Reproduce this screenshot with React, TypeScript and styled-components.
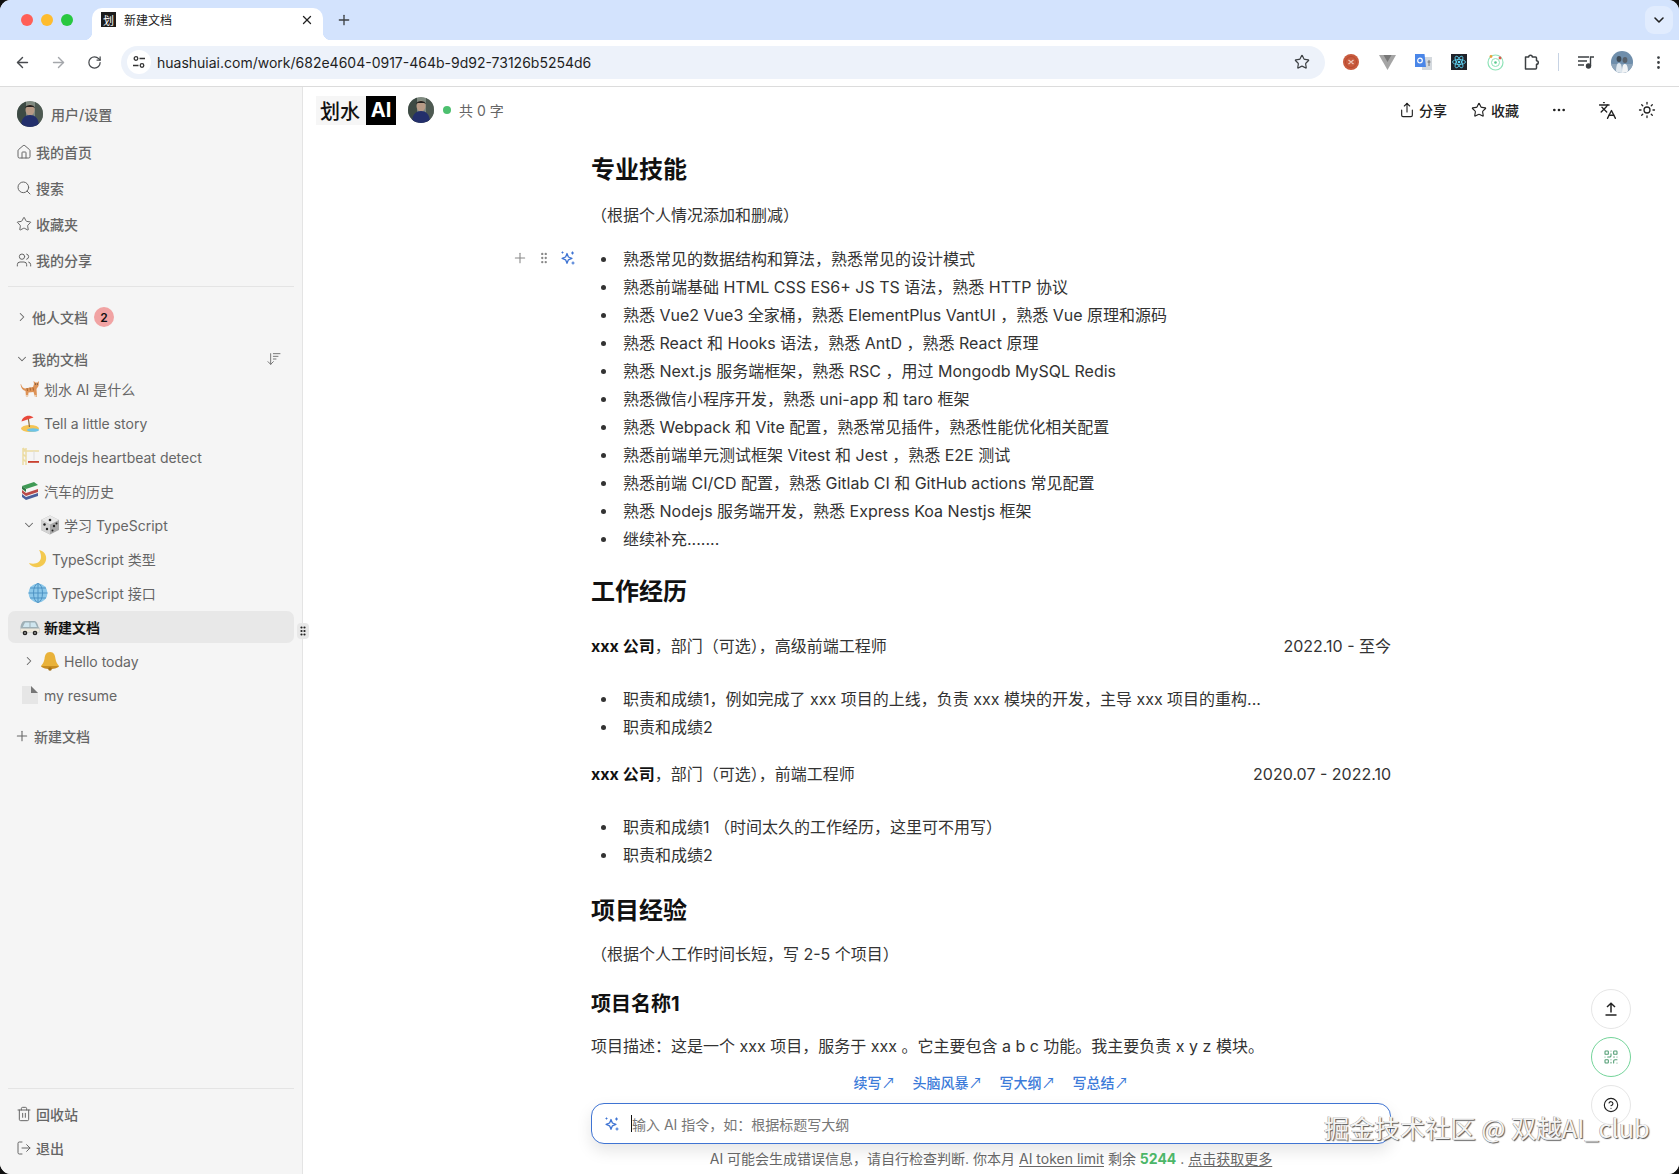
import React from 'react'
import styled, { createGlobalStyle } from 'styled-components'
import {
  ArrowLeft,
  ArrowRight,
  RotateCw,
  Star,
  X,
  Plus,
  ChevronDown,
  ChevronRight,
  EllipsisVertical,
  Ellipsis,
  House,
  Search,
  Users,
  ArrowDownWideNarrow,
  Trash2,
  LogOut,
  Share,
  Languages,
  Sun,
  QrCode,
  CircleHelp,
  GripVertical,
} from 'lucide-react'

const FONT = `Inter, 'Noto Sans CJK SC', 'Noto Sans', sans-serif`

const GlobalStyle = createGlobalStyle`
  html, body {
    margin: 0;
    padding: 0;
    background: #111;
    font-family: ${FONT};
  }
  * {
    box-sizing: border-box;
  }
`

const Window = styled.div`
  position: relative;
  width: 1679px;
  height: 1174px;
  display: flex;
  flex-direction: column;
  overflow: hidden;
  border-radius: 11px;
  background: #fff;
`

const TabStrip = styled.div`
  height: 40px;
  flex: none;
  display: flex;
  align-items: flex-end;
  padding-left: 17px;
  background: #d3e3fd;
`

const TrafficLights = styled.div`
  width: 75px;
  height: 40px;
  display: flex;
  align-items: center;
  gap: 8px;
  padding: 0 0 1px 4px;
`

const Light = styled.span<{ $color: string }>`
  width: 12px;
  height: 12px;
  border-radius: 50%;
  background: ${({ $color }) => $color};
`

const Tab = styled.div`
  position: relative;
  width: 231px;
  height: 32px;
  display: flex;
  align-items: center;
  padding: 0 9px 9px;
  gap: 8px;
  background: #fff;
  border-radius: 10px 10px 0 0;
  font-size: 12px;
  color: #222;

  &::before,
  &::after {
    content: '';
    position: absolute;
    bottom: 0;
    width: 8px;
    height: 8px;
  }
  &::before {
    left: -8px;
    background: radial-gradient(circle at 0 0, transparent 8px, #fff 8.5px);
  }
  &::after {
    right: -8px;
    background: radial-gradient(circle at 100% 0, transparent 8px, #fff 8.5px);
  }
`

const Favicon = styled.span`
  width: 15px;
  height: 15px;
  display: flex;
  align-items: center;
  justify-content: center;
  background: #1c1c1c;
  color: #fff;
  font-size: 11px;
`

const TabTitle = styled.span`
  flex: 1;
`

const NewTab = styled.span`
  width: 42px;
  height: 32px;
  padding-bottom: 9px;
  display: flex;
  align-items: center;
  justify-content: center;
  color: #3c4043;
`

const TabMenu = styled.span`
  margin-left: auto;
  margin-right: 6px;
  margin-bottom: 6px;
  width: 28px;
  height: 28px;
  border-radius: 9px;
  display: flex;
  align-items: center;
  justify-content: center;
  background: #e1ecfe;
  color: #222;
`

const Toolbar = styled.div`
  height: 47px;
  flex: none;
  display: flex;
  align-items: center;
  background: #fff;
  border-bottom: 1px solid #dcdcdc;
  padding: 0 0 2px 13px;
`

const NavButton = styled.span<{ $muted?: boolean }>`
  width: 18px;
  height: 18px;
  margin-right: 18px;
  display: flex;
  align-items: center;
  justify-content: center;
  color: ${({ $muted }) => ($muted ? '#a4a7ab' : '#474a4e')};
`

const Omnibox = styled.div`
  width: 1204px;
  height: 33px;
  display: flex;
  align-items: center;
  border-radius: 17px;
  background: #edf2fa;
  padding: 0 15px 0 6px;
  font-size: 14px;
  color: #1f1f1f;
`

const SiteBadge = styled.span`
  width: 24px;
  height: 24px;
  margin-right: 6px;
  border-radius: 50%;
  background: #fff;
  display: flex;
  align-items: center;
  justify-content: center;
`

const Url = styled.span`
  flex: 1;
`

const ExtensionTray = styled.div`
  display: flex;
  align-items: center;
  margin-left: 8px;
`

const ExtensionSlot = styled.span`
  width: 36px;
  height: 24px;
  display: flex;
  align-items: center;
  justify-content: center;
  color: #3c4043;
`

const TrayDivider = styled.span`
  width: 1px;
  height: 18px;
  margin: 0 9px;
  background: #c7d3e4;
`

const Body = styled.div`
  flex: 1;
  min-height: 0;
  display: flex;
`

const Sidebar = styled.aside`
  position: relative;
  z-index: 1;
  width: 303px;
  flex: none;
  display: flex;
  flex-direction: column;
  padding: 10px 8px 9px;
  background: #f5f5f5;
  border-right: 1px solid #e4e4e4;
  font-size: 14px;
  color: #666;
`

const UserRow = styled.div`
  height: 34px;
  margin-bottom: 3px;
  display: flex;
  align-items: center;
  gap: 8px;
  padding-left: 9px;
  font-weight: 500;
`

const NavRow = styled.div<{ $height?: number }>`
  height: ${({ $height }) => $height ?? 36}px;
  display: flex;
  align-items: center;
  gap: 4px;
  padding-left: 8px;
  font-weight: 500;
`

const SideDivider = styled.div<{ $top: number; $bottom: number }>`
  height: 1px;
  flex: none;
  margin: ${({ $top, $bottom }) => `${$top}px 0 ${$bottom}px`};
  background: #e4e4e4;
`

const SectionRow = styled.div<{ $top?: number; $height?: number }>`
  height: ${({ $height }) => $height ?? 34}px;
  margin-top: ${({ $top }) => $top ?? 0}px;
  flex: none;
  display: flex;
  align-items: center;
  gap: 3px;
  padding-left: 7px;
  font-weight: 500;
`

const CountBadge = styled.span`
  width: 20px;
  height: 20px;
  margin-left: 3px;
  border-radius: 50%;
  display: flex;
  align-items: center;
  justify-content: center;
  background: #f1a3a3;
  color: #111;
  font-size: 12px;
  font-weight: 600;
`

const SortIcon = styled.span`
  margin-left: auto;
  margin-right: 12px;
  display: flex;
  color: #777;
`

const DocList = styled.div`
  margin-top: 1px;
  display: flex;
  flex-direction: column;
  gap: 2px;
`

const DocRow = styled.div<{ $indent: number; $active?: boolean }>`
  height: 32px;
  display: flex;
  align-items: center;
  gap: 4px;
  padding-left: ${({ $indent }) => $indent}px;
  border-radius: 7px;
  background: ${({ $active }) => ($active ? '#e8e8e8' : 'transparent')};
  color: ${({ $active }) => ($active ? '#111' : '#666')};
  font-weight: ${({ $active }) => ($active ? 600 : 400)};
`

const NewDocRow = styled.div`
  height: 34px;
  margin-top: 8px;
  display: flex;
  align-items: center;
  gap: 4px;
  padding-left: 6px;
  font-weight: 500;
`

const BottomGroup = styled.div`
  margin-top: auto;
  display: flex;
  flex-direction: column;
`

const ResizeHandle = styled.span`
  position: absolute;
  right: -7px;
  top: 536px;
  width: 12px;
  height: 16px;
  display: flex;
  align-items: center;
  justify-content: center;
  border-radius: 4px;
  background: #e8e8e8;
  color: #222;
`

const Main = styled.main`
  position: relative;
  flex: 1;
  min-width: 0;
  overflow: hidden;
  background: #fff;
`

const AppHeader = styled.header`
  height: 46px;
  display: flex;
  align-items: center;
  padding: 0 23px 0 13px;
`

const Logo = styled.div`
  display: flex;
  align-items: center;
  height: 29px;
  background: #f6f6f6;
  font-size: 20px;
  font-weight: 500;
  color: #111;
`

const LogoText = styled.span`
  padding: 0 6px 0 4px;
`

const LogoMark = styled.span`
  width: 30px;
  height: 29px;
  display: flex;
  align-items: center;
  justify-content: center;
  background: #000;
  color: #fff;
  font-weight: 700;
`

const HeaderAvatar = styled.span`
  margin-left: 12px;
  display: flex;
`

const StatusDot = styled.span`
  width: 8px;
  height: 8px;
  margin-left: 9px;
  border-radius: 50%;
  background: #4cc06f;
`

const WordCount = styled.span`
  margin-left: 8px;
  font-size: 14px;
  color: #666;
`

const HeaderActions = styled.div`
  margin-left: auto;
  display: flex;
  align-items: center;
  color: #222;
`

const HeaderAction = styled.span<{ $width: number }>`
  width: ${({ $width }) => $width}px;
  display: flex;
  align-items: center;
  gap: 4px;
  font-size: 14px;
  font-weight: 500;
`

const Article = styled.article`
  width: 800px;
  margin: 19px auto 0;
  font-size: 16px;
  color: #333;
`

const Heading = styled.h2<{ $top?: number }>`
  margin: ${({ $top }) => $top ?? 0}px 0 0;
  padding-top: 2px;
  font-size: 24px;
  line-height: 32px;
  font-weight: 700;
  color: #111;
`

const SubHeading = styled.h3<{ $top: number }>`
  margin: ${({ $top }) => $top}px 0 0;
  font-size: 20px;
  line-height: 28px;
  font-weight: 700;
  color: #111;
`

const Para = styled.p<{ $top: number }>`
  margin: ${({ $top }) => $top}px 0 0;
  line-height: 28px;
`

const JobRow = styled.div<{ $top: number }>`
  margin-top: ${({ $top }) => $top}px;
  display: flex;
  justify-content: space-between;
  line-height: 28px;

  strong {
    font-weight: 700;
    color: #111;
  }
`

const Bullets = styled.ul<{ $top: number }>`
  position: relative;
  list-style: none;
  margin: ${({ $top }) => $top}px 0 0;
  padding: 0 0 0 32px;
`

const Bullet = styled.li`
  position: relative;
  line-height: 28px;

  &::before {
    content: '';
    position: absolute;
    left: -22px;
    top: 12px;
    width: 5px;
    height: 5px;
    border-radius: 50%;
    background: #333;
  }
`

const BlockHandle = styled.div`
  position: absolute;
  left: -79px;
  top: 5px;
  display: flex;
  align-items: center;
  gap: 9px;
  color: #888;
`

const AiPanel = styled.div`
  position: absolute;
  left: 288px;
  bottom: 5px;
  width: 800px;
  display: flex;
  flex-direction: column;
  align-items: center;
`

const QuickLinks = styled.div`
  height: 20px;
  display: flex;
  align-items: center;
  gap: 17px;
  color: #3c7bd9;
  font-size: 14px;
  font-weight: 500;
`

const QuickArrow = styled.span`
  font-family: 'Noto Sans CJK SC', sans-serif;
  font-weight: 400;
`

const AiInput = styled.div`
  width: 800px;
  height: 41px;
  margin-top: 11px;
  display: flex;
  align-items: center;
  padding-left: 12px;
  border: 1px solid #3f74d3;
  border-radius: 13px;
  background: #fff;
  box-shadow: 0 7px 16px rgba(0, 0, 0, 0.1);
  font-size: 14px;
  color: #777;
`

const Caret = styled.span`
  width: 1px;
  height: 17px;
  margin-left: 11px;
  background: #111;
`

const AiNote = styled.div`
  height: 20px;
  margin-top: 5px;
  font-size: 14px;
  line-height: 20px;
  color: #666;

  u {
    text-underline-offset: 2px;
  }
  b {
    color: #4cb668;
    font-weight: 700;
  }
`

const FloatStack = styled.div`
  position: absolute;
  right: 48px;
  bottom: 49px;
  display: flex;
  flex-direction: column;
  gap: 8px;
`

const FloatButton = styled.span<{ $accent?: boolean }>`
  width: 40px;
  height: 40px;
  border-radius: 50%;
  display: flex;
  align-items: center;
  justify-content: center;
  border: 1px solid ${({ $accent }) => ($accent ? '#74d49a' : '#e6e6e6')};
  background: #fff;
  color: ${({ $accent }) => ($accent ? '#4f9c72' : '#222')};
`

const Watermark = styled.div`
  position: absolute;
  left: 1324px;
  top: 1109px;
  font-family: 'Noto Sans CJK SC', 'Noto Sans', sans-serif;
  font-size: 25.3px;
  line-height: 36px;
  white-space: nowrap;
  color: #f4f4f4;
  text-shadow: 1px 1px 1px #555, -0.5px -0.5px 0 #999;
`

const Sparkle = ({ size = 16, color = '#3f74d3' }: { size?: number; color?: string }) => (
  <svg width={size} height={size} viewBox="0 0 16 16" fill="none" stroke={color} strokeWidth="1.3" strokeLinejoin="round">
    <path d="M7 3.5 8.4 7l3.5 1.4-3.5 1.4L7 13.3 5.6 9.8 2.1 8.4 5.6 7z" />
    <path d="M12.5 1.5v3M11 3h3M13 11.5v3M11.5 13h3" strokeWidth="1.1" />
    <path d="M2.5 1.5v2M1.5 2.5h2" strokeWidth="1" />
  </svg>
)

const TuneIcon = () => (
  <svg width="14" height="14" viewBox="0 0 14 14" fill="none" stroke="#333" strokeWidth="1.3">
    <circle cx="4" cy="3.5" r="1.8" />
    <path d="M7.5 3.5H13M1 10.5h5.5" />
    <circle cx="10" cy="10.5" r="1.8" />
  </svg>
)

const Avatar = ({ size }: { size: number }) => (
  <svg width={size} height={size} viewBox="0 0 26 26">
    <defs>
      <clipPath id={`av${size}`}>
        <circle cx="13" cy="13" r="13" />
      </clipPath>
    </defs>
    <g clipPath={`url(#av${size})`}>
      <rect width="26" height="26" fill="#7f8a80" />
      <rect x="0" y="0" width="9" height="26" fill="#3d4a44" />
      <rect x="18" y="0" width="8" height="26" fill="#4e5a52" />
      <ellipse cx="13" cy="9" rx="4.5" ry="5.5" fill="#b79a86" />
      <path d="M8 7c1-4 9-4 10 0l-2-1H10z" fill="#22201f" />
      <path d="M4 26c0-9 4-12 9-12s9 3 9 12z" fill="#232f6b" />
    </g>
  </svg>
)

const ProfileAvatar = () => (
  <svg width="22" height="22" viewBox="0 0 22 22">
    <defs>
      <clipPath id="prof">
        <circle cx="11" cy="11" r="11" />
      </clipPath>
    </defs>
    <g clipPath="url(#prof)">
      <rect width="22" height="22" fill="#6f8eab" />
      <rect y="13" width="22" height="9" fill="#8ea5ba" />
      <ellipse cx="8" cy="8" rx="2.4" ry="3" fill="#3e4a55" />
      <ellipse cx="14" cy="9" rx="2.4" ry="3" fill="#59616a" />
      <path d="M5 22c0-7 1-10 3-10s3 3 3 10z" fill="#dfe7ee" />
      <path d="M11 22c0-7 1-9 3-9s3 3 3 9z" fill="#f2f4f6" />
    </g>
  </svg>
)

const CatEmoji = () => (
  <svg width="20" height="20" viewBox="0 0 20 20">
    <path d="M1 5c1 3 2 4 4 4.500L13 8l1-3-.5-3 2 1.500h2L19 2l-.5 5-2 3 .5 8h-2l-1.500-5-5 .5L8 18H6l-.5-6C3 11.500 1 9 .5 5.500z" fill="#dd9256" />
    <path d="M7 9l.5 3M10 8.500l.5 3M13 8.500l.5 3" stroke="#a9652f" strokeWidth="1" />
    <path d="M6 17h2M14.500 17h2" stroke="#f2e3d2" strokeWidth="1.500" />
    <circle cx="15.500" cy="5" r=".6" fill="#333" />
    <circle cx="17.500" cy="5" r=".6" fill="#333" />
  </svg>
)

const BeachEmoji = () => (
  <svg width="20" height="20" viewBox="0 0 20 20">
    <ellipse cx="10" cy="15.500" rx="9" ry="3.500" fill="#f5c453" />
    <path d="M8 3 9.500 14" stroke="#8a6a3b" strokeWidth="1.200" />
    <path d="M1.500 8.500C2 3.500 9 .500 13.500 4.500z" fill="#e8483b" />
    <ellipse cx="13" cy="17" rx="6" ry="1.800" fill="#6cc4e8" />
  </svg>
)

const CraneEmoji = () => (
  <svg width="20" height="20" viewBox="0 0 20 20" fill="none">
    <path d="M3 1v17M6 1v17M3 4h16M3 1l3 3M3 7l3 3M3 12l3 3" stroke="#ecdca2" strokeWidth="1.500" />
    <path d="M14 4v9" stroke="#ddd" strokeWidth="1" />
    <rect x="8" y="14" width="11" height="1.800" fill="#c9402f" />
  </svg>
)

const BooksEmoji = () => (
  <svg width="20" height="20" viewBox="0 0 20 20">
    <path d="M2 5 14 1l4 3-12 4z" fill="#3f9a55" />
    <path d="M2 5l4 3v3L2 8z" fill="#2e7a42" />
    <path d="M2 9l4 3 12-4v3L6 15l-4-3z" fill="#b94a48" />
    <path d="M2 13l4 3 12-4v3L6 19l-4-3z" fill="#4a5f9c" />
  </svg>
)

const DiceEmoji = () => (
  <svg width="20" height="20" viewBox="0 0 20 20">
    <path d="M10 .5l9 4.500v10l-9 4.500-9-4.500V5z" fill="#a9a9a9" />
    <path d="M10 .5l9 4.500-9 4.500L1 5z" fill="#e8e8e8" />
    <path d="M10 9.500v10L1 15V5z" fill="#d2d2d2" />
    <circle cx="10" cy="5" r="1.300" fill="#222" />
    <circle cx="4.500" cy="9.500" r="1.200" fill="#222" />
    <circle cx="7" cy="14" r="1.200" fill="#222" />
    <circle cx="14" cy="11" r="1.200" fill="#222" />
    <circle cx="12.500" cy="15.500" r="1" fill="#222" />
    <circle cx="16.500" cy="8.500" r="1" fill="#222" />
  </svg>
)

const MoonEmoji = () => (
  <svg width="20" height="20" viewBox="0 0 20 20">
    <path d="M11 1c5 1 8 5 7 10-1 5-6 8-11 7-3-.500-5-2-6-4 6 2 12-.500 12-6 0-3-1-5.500-2-7z" fill="#f3c94f" />
  </svg>
)

const GlobeEmoji = () => (
  <svg width="20" height="20" viewBox="0 0 20 20" fill="none">
    <circle cx="10" cy="10" r="9.500" fill="#8cc8ea" />
    <ellipse cx="10" cy="10" rx="4.500" ry="9.500" stroke="#4e93c4" strokeWidth="1" />
    <path d="M10 .5v19M.5 10h19M2 5h16M2 15h16" stroke="#4e93c4" strokeWidth="1" />
  </svg>
)

const BusEmoji = () => (
  <svg width="20" height="20" viewBox="0 0 20 20">
    <path d="M4.500 4h10c2 0 3 2.500 4 6l1 1v4.500H.5V10c.5-3 2-6 4-6z" fill="#9fb0b6" />
    <path d="M.5 11.500h19v4H.5z" fill="#ece7da" />
    <path d="M5 5.500h4.500v4.500H2.800zM10.500 5.500H15l2 4.500h-6.500z" fill="#cfe6ef" />
    <circle cx="5" cy="16" r="2.300" fill="#222" />
    <circle cx="15" cy="16" r="2.300" fill="#222" />
    <circle cx="5" cy="16" r=".8" fill="#ddd" />
    <circle cx="15" cy="16" r=".8" fill="#ddd" />
  </svg>
)

const BellEmoji = () => (
  <svg width="20" height="20" viewBox="0 0 20 20">
    <path d="M10 1c4 0 5 3 5.500 7 .4 3 2 5 3.500 7H1c1.500-2 3.100-4 3.500-7C5 4 6 1 10 1z" fill="#e9b23a" />
    <path d="M1 15h18c0 1.500-4 3-9 3s-9-1.500-9-3z" fill="#c78c21" />
    <circle cx="10" cy="18" r="1.800" fill="#a36f16" />
  </svg>
)

const PageEmoji = () => (
  <svg width="20" height="20" viewBox="0 0 20 20">
    <path d="M2 1h9l7 7v11H2z" fill="#e6e6e6" />
    <path d="M11 1l7 7h-7z" fill="#777" />
  </svg>
)

const ReactLogo = () => (
  <svg width="16" height="16" viewBox="0 0 16 16">
    <rect width="16" height="16" fill="#20232a" />
    <g fill="none" stroke="#61dafb" strokeWidth=".8">
      <ellipse cx="8" cy="8" rx="6.500" ry="2.500" />
      <ellipse cx="8" cy="8" rx="6.500" ry="2.500" transform="rotate(60 8 8)" />
      <ellipse cx="8" cy="8" rx="6.500" ry="2.500" transform="rotate(120 8 8)" />
    </g>
    <circle cx="8" cy="8" r="1.300" fill="#61dafb" />
  </svg>
)

const TranslateExt = () => (
  <svg width="17" height="16" viewBox="0 0 17 16">
    <path d="M7 3h10v13H7z" fill="#d4d9de" />
    <path d="M0 0h9.500l1.500 13H0z" fill="#4a86e8" />
    <circle cx="5" cy="6.500" r="2.300" fill="none" stroke="#fff" strokeWidth="1.200" />
    <path d="M12.500 8h3M14 6v6" stroke="#777" strokeWidth="1" />
  </svg>
)

const VeeExt = () => (
  <svg width="17" height="15" viewBox="0 0 17 15">
    <path d="M0 0h17L8.500 15z" fill="#a5a5a5" />
    <path d="M4.500 0h8L8.500 7z" fill="#777" />
  </svg>
)

const RedExt = () => (
  <svg width="16" height="16" viewBox="0 0 16 16">
    <circle cx="8" cy="8" r="8" fill="#c85b3e" />
    <circle cx="8" cy="8" r="5.500" fill="none" stroke="#b84a30" strokeWidth="1" />
    <path d="M5.500 6 8 8l2.500-2M5.500 10 8 8l2.500 2" stroke="#eec9bc" strokeWidth="1.300" fill="none" />
  </svg>
)

const RadarExt = () => (
  <svg width="17" height="17" viewBox="0 0 17 17" fill="none">
    <circle cx="8.500" cy="8.500" r="7.500" stroke="#8fe3b8" strokeWidth="1.200" />
    <circle cx="8.500" cy="8.500" r="4" stroke="#8fe3b8" strokeWidth="1" />
    <circle cx="8.500" cy="8.500" r="1.300" fill="#58c98e" />
    <circle cx="4" cy="2.500" r="1.400" fill="#e9a23b" />
    <circle cx="13" cy="4" r="1.400" fill="#e2574c" />
  </svg>
)

const PuzzleExt = () => (
  <svg width="17" height="17" viewBox="0 0 17 17" fill="none" stroke="#3c4043" strokeWidth="1.500" strokeLinejoin="round">
    <path d="M2.500 3h3.200a1.800 1.800 0 0 1 3.600 0h3.200a1 1 0 0 1 1 1v2.700a1.800 1.800 0 0 1 0 3.600V14a1 1 0 0 1-1 1h-10z" />
  </svg>
)

const PlayQueue = () => (
  <svg width="16" height="14" viewBox="0 0 16 14" fill="none" stroke="#3c4043" strokeWidth="1.400">
    <path d="M0 2h11M0 6h9M0 10h6" />
    <path d="M12.500 11V2H16" />
    <circle cx="10.500" cy="11" r="2" fill="#3c4043" />
  </svg>
)

const ArrowToTop = () => (
  <svg width="16" height="16" viewBox="0 0 16 16" fill="none" stroke="#222" strokeWidth="1.500">
    <path d="M8 11.500V2.500M4 6l4-3.800L12 6M2.500 14h11" />
  </svg>
)

const skills = [
  '熟悉常见的数据结构和算法，熟悉常见的设计模式',
  '熟悉前端基础 HTML CSS ES6+ JS TS 语法，熟悉 HTTP 协议',
  '熟悉 Vue2 Vue3 全家桶，熟悉 ElementPlus VantUI ，熟悉 Vue 原理和源码',
  '熟悉 React 和 Hooks 语法，熟悉 AntD ，熟悉 React 原理',
  '熟悉 Next.js 服务端框架，熟悉 RSC ，用过 Mongodb MySQL Redis',
  '熟悉微信小程序开发，熟悉 uni-app 和 taro 框架',
  '熟悉 Webpack 和 Vite 配置，熟悉常见插件，熟悉性能优化相关配置',
  '熟悉前端单元测试框架 Vitest 和 Jest ，熟悉 E2E 测试',
  '熟悉前端 CI/CD 配置，熟悉 Gitlab CI 和 GitHub actions 常见配置',
  '熟悉 Nodejs 服务端开发，熟悉 Express Koa Nestjs 框架',
  '继续补充.......',
]

const navItems = [
  { label: '我的首页', icon: <House size={16} strokeWidth={1.5} /> },
  { label: '搜索', icon: <Search size={16} strokeWidth={1.5} /> },
  { label: '收藏夹', icon: <Star size={16} strokeWidth={1.5} /> },
  { label: '我的分享', icon: <Users size={16} strokeWidth={1.5} /> },
]

const docs = [
  { title: '划水 AI 是什么', indent: 12, icon: <CatEmoji /> },
  { title: 'Tell a little story', indent: 12, icon: <BeachEmoji /> },
  { title: 'nodejs heartbeat detect', indent: 12, icon: <CraneEmoji /> },
  { title: '汽车的历史', indent: 12, icon: <BooksEmoji /> },
  { title: '学习 TypeScript', indent: 14, icon: <DiceEmoji />, chevron: 'down' },
  { title: 'TypeScript 类型', indent: 20, icon: <MoonEmoji /> },
  { title: 'TypeScript 接口', indent: 20, icon: <GlobeEmoji /> },
  { title: '新建文档', indent: 12, icon: <BusEmoji />, active: true },
  { title: 'Hello today', indent: 14, icon: <BellEmoji />, chevron: 'right' },
  { title: 'my resume', indent: 12, icon: <PageEmoji /> },
]

const quickLinks = ['续写', '头脑风暴', '写大纲', '写总结']

const App: React.FC = () => {
  return (
    <Window>
      <GlobalStyle />
      <TabStrip>
        <TrafficLights>
          <Light $color="#ff5f57" />
          <Light $color="#febc2e" />
          <Light $color="#28c840" />
        </TrafficLights>
        <Tab>
          <Favicon>划</Favicon>
          <TabTitle>新建文档</TabTitle>
          <X size={14} strokeWidth={2.2} color="#222" />
        </Tab>
        <NewTab>
          <Plus size={16} strokeWidth={2} />
        </NewTab>
        <TabMenu>
          <ChevronDown size={16} strokeWidth={2.4} />
        </TabMenu>
      </TabStrip>

      <Toolbar>
        <NavButton>
          <ArrowLeft size={17} strokeWidth={2} />
        </NavButton>
        <NavButton $muted>
          <ArrowRight size={17} strokeWidth={2} />
        </NavButton>
        <NavButton>
          <RotateCw size={15} strokeWidth={2} />
        </NavButton>
        <Omnibox>
          <SiteBadge>
            <TuneIcon />
          </SiteBadge>
          <Url>huashuiai.com/work/682e4604-0917-464b-9d92-73126b5254d6</Url>
          <Star size={16} strokeWidth={1.8} color="#3c4043" />
        </Omnibox>
        <ExtensionTray>
          <ExtensionSlot><RedExt /></ExtensionSlot>
          <ExtensionSlot><VeeExt /></ExtensionSlot>
          <ExtensionSlot><TranslateExt /></ExtensionSlot>
          <ExtensionSlot><ReactLogo /></ExtensionSlot>
          <ExtensionSlot><RadarExt /></ExtensionSlot>
          <ExtensionSlot><PuzzleExt /></ExtensionSlot>
          <TrayDivider />
          <ExtensionSlot><PlayQueue /></ExtensionSlot>
          <ExtensionSlot><ProfileAvatar /></ExtensionSlot>
          <ExtensionSlot><EllipsisVertical size={17} strokeWidth={2} /></ExtensionSlot>
        </ExtensionTray>
      </Toolbar>

      <Body>
        <Sidebar>
          <UserRow>
            <Avatar size={26} />
            用户/设置
          </UserRow>
          {navItems.map((item) => (
            <NavRow key={item.label}>
              {item.icon}
              {item.label}
            </NavRow>
          ))}
          <SideDivider $top={8} $bottom={13} />
          <SectionRow>
            <ChevronRight size={14} strokeWidth={1.8} />
            他人文档
            <CountBadge>2</CountBadge>
          </SectionRow>
          <SectionRow $top={12} $height={26}>
            <ChevronDown size={14} strokeWidth={1.8} />
            我的文档
            <SortIcon>
              <ArrowDownWideNarrow size={16} strokeWidth={1.5} />
            </SortIcon>
          </SectionRow>
          <DocList>
            {docs.map((doc) => (
              <DocRow key={doc.title} $indent={doc.indent} $active={doc.active}>
                {doc.chevron === 'down' && <ChevronDown size={14} strokeWidth={1.8} />}
                {doc.chevron === 'right' && <ChevronRight size={14} strokeWidth={1.8} />}
                {doc.icon}
                {doc.title}
              </DocRow>
            ))}
          </DocList>
          <NewDocRow>
            <Plus size={16} strokeWidth={1.6} />
            新建文档
          </NewDocRow>
          <BottomGroup>
            <SideDivider $top={0} $bottom={8} />
            <NavRow $height={34}>
              <Trash2 size={16} strokeWidth={1.5} />
              回收站
            </NavRow>
            <NavRow $height={34}>
              <LogOut size={16} strokeWidth={1.5} />
              退出
            </NavRow>
          </BottomGroup>
          <ResizeHandle>
            <GripVertical size={12} strokeWidth={2.4} />
          </ResizeHandle>
        </Sidebar>

        <Main>
          <AppHeader>
            <Logo>
              <LogoText>划水</LogoText>
              <LogoMark>AI</LogoMark>
            </Logo>
            <HeaderAvatar>
              <Avatar size={26} />
            </HeaderAvatar>
            <StatusDot />
            <WordCount>共 0 字</WordCount>
            <HeaderActions>
              <HeaderAction $width={72}>
                <Share size={16} strokeWidth={1.7} />
                分享
              </HeaderAction>
              <HeaderAction $width={80}>
                <Star size={16} strokeWidth={1.7} />
                收藏
              </HeaderAction>
              <HeaderAction $width={47}>
                <Ellipsis size={16} strokeWidth={2} />
              </HeaderAction>
              <HeaderAction $width={40}>
                <Languages size={19} strokeWidth={1.7} />
              </HeaderAction>
              <HeaderAction $width={18}>
                <Sun size={18} strokeWidth={1.7} />
              </HeaderAction>
            </HeaderActions>
          </AppHeader>

          <Article>
            <Heading>专业技能</Heading>
            <Para $top={15}>（根据个人情况添加和删减）</Para>
            <Bullets $top={16}>
              <BlockHandle>
                <Plus size={16} strokeWidth={1.6} />
                <GripVertical size={14} strokeWidth={2} />
                <Sparkle />
              </BlockHandle>
              {skills.map((skill) => (
                <Bullet key={skill}>{skill}</Bullet>
              ))}
            </Bullets>

            <Heading $top={21}>工作经历</Heading>
            <JobRow $top={24}>
              <span><strong>xxx 公司</strong>，部门（可选），高级前端工程师</span>
              <span>2022.10 - 至今</span>
            </JobRow>
            <Bullets $top={25}>
              <Bullet>职责和成绩1，例如完成了 xxx 项目的上线，负责 xxx 模块的开发，主导 xxx 项目的重构...</Bullet>
              <Bullet>职责和成绩2</Bullet>
            </Bullets>
            <JobRow $top={19}>
              <span><strong>xxx 公司</strong>，部门（可选），前端工程师</span>
              <span>2020.07 - 2022.10</span>
            </JobRow>
            <Bullets $top={25}>
              <Bullet>职责和成绩1 （时间太久的工作经历，这里可不用写）</Bullet>
              <Bullet>职责和成绩2</Bullet>
            </Bullets>

            <Heading $top={24}>项目经验</Heading>
            <Para $top={13}>（根据个人工作时间长短，写 2-5 个项目）</Para>
            <SubHeading $top={22}>项目名称1</SubHeading>
            <Para $top={14}>项目描述：这是一个 xxx 项目，服务于 xxx 。它主要包含 a b c 功能。我主要负责 x y z 模块。</Para>
          </Article>

          <AiPanel>
            <QuickLinks>
              {quickLinks.map((link) => (
                <span key={link}>
                  {link}
                  <QuickArrow>↗</QuickArrow>
                </span>
              ))}
            </QuickLinks>
            <AiInput>
              <Sparkle />
              <Caret />
              输入 AI 指令，如：根据标题写大纲
            </AiInput>
            <AiNote>
              AI 可能会生成错误信息，请自行检查判断. 你本月 <u>AI token limit</u> 剩余 <b>5244</b> . <u>点击获取更多</u>
            </AiNote>
          </AiPanel>

          <FloatStack>
            <FloatButton><ArrowToTop /></FloatButton>
            <FloatButton $accent><QrCode size={16} strokeWidth={1.6} /></FloatButton>
            <FloatButton><CircleHelp size={16} strokeWidth={1.7} /></FloatButton>
          </FloatStack>
        </Main>
      </Body>
      <Watermark>掘金技术社区 @ 双越AI_club</Watermark>
    </Window>
  )
}

export default App
